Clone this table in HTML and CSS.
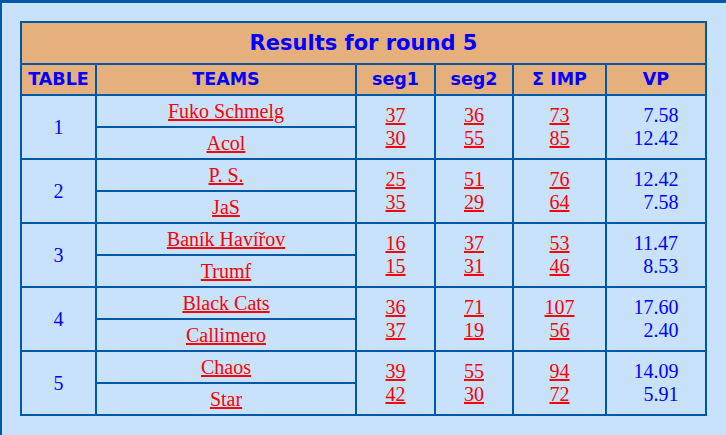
FILE: index.html
```html
<!DOCTYPE html>
<html>
<head>
<meta charset="utf-8">
<title>Results for round 5</title>
<link rel="stylesheet" href="styles.css">
</head>
<body>
<table class="results">
  <colgroup>
    <col class="c-table"><col class="c-teams"><col class="c-seg"><col class="c-seg2"><col class="c-imp"><col class="c-vp">
  </colgroup>
  <thead>
    <tr><th class="title" colspan="6">Results for round 5</th></tr>
    <tr class="heads"><th>TABLE</th><th>TEAMS</th><th>seg1</th><th>seg2</th><th>&Sigma; IMP</th><th>VP</th></tr>
  </thead>
  <tbody>
    <tr>
      <td class="tbl" rowspan="2">1</td>
      <td class="team"><a href="#">Fuko Schmelg</a></td>
      <td class="num" rowspan="2"><a href="#">37</a><br><a href="#">30</a></td>
      <td class="num" rowspan="2"><a href="#">36</a><br><a href="#">55</a></td>
      <td class="num" rowspan="2"><a href="#">73</a><br><a href="#">85</a></td>
      <td class="vp" rowspan="2"><div class="vpbox">7.58<br>12.42</div></td>
    </tr>
    <tr><td class="team"><a href="#">Acol</a></td></tr>
    <tr>
      <td class="tbl" rowspan="2">2</td>
      <td class="team"><a href="#">P. S.</a></td>
      <td class="num" rowspan="2"><a href="#">25</a><br><a href="#">35</a></td>
      <td class="num" rowspan="2"><a href="#">51</a><br><a href="#">29</a></td>
      <td class="num" rowspan="2"><a href="#">76</a><br><a href="#">64</a></td>
      <td class="vp" rowspan="2"><div class="vpbox">12.42<br>7.58</div></td>
    </tr>
    <tr><td class="team"><a href="#">JaS</a></td></tr>
    <tr>
      <td class="tbl" rowspan="2">3</td>
      <td class="team"><a href="#">Baník Havířov</a></td>
      <td class="num" rowspan="2"><a href="#">16</a><br><a href="#">15</a></td>
      <td class="num" rowspan="2"><a href="#">37</a><br><a href="#">31</a></td>
      <td class="num" rowspan="2"><a href="#">53</a><br><a href="#">46</a></td>
      <td class="vp" rowspan="2"><div class="vpbox">11.47<br>8.53</div></td>
    </tr>
    <tr><td class="team"><a href="#">Trumf</a></td></tr>
    <tr>
      <td class="tbl" rowspan="2">4</td>
      <td class="team"><a href="#">Black Cats</a></td>
      <td class="num" rowspan="2"><a href="#">36</a><br><a href="#">37</a></td>
      <td class="num" rowspan="2"><a href="#">71</a><br><a href="#">19</a></td>
      <td class="num" rowspan="2"><a href="#">107</a><br><a href="#">56</a></td>
      <td class="vp" rowspan="2"><div class="vpbox">17.60<br>2.40</div></td>
    </tr>
    <tr><td class="team"><a href="#">Callimero</a></td></tr>
    <tr>
      <td class="tbl" rowspan="2">5</td>
      <td class="team"><a href="#">Chaos</a></td>
      <td class="num" rowspan="2"><a href="#">39</a><br><a href="#">42</a></td>
      <td class="num" rowspan="2"><a href="#">55</a><br><a href="#">30</a></td>
      <td class="num" rowspan="2"><a href="#">94</a><br><a href="#">72</a></td>
      <td class="vp" rowspan="2"><div class="vpbox">14.09<br>5.91</div></td>
    </tr>
    <tr><td class="team"><a href="#">Star</a></td></tr>
  </tbody>
</table>
</body>
</html>
```
FILE: styles.css
```css
html, body {
  margin: 0;
  background: #c8e2fc;
}
body {
  min-height: 435px;
  box-sizing: border-box;
  border-top: 3px solid #0059a6;
  border-left: 2px solid #0059a6;
  padding: 18px 0 0 18px;
  font-family: "Liberation Serif", "Times New Roman", serif;
  font-size: 20px;
  color: #0000ff;
}
.results {
  border-collapse: collapse;
  table-layout: fixed;
  width: 687px;
  border: 2px solid #0059a6;
}
.results th, .results td {
  border: 2px solid #0059a6;
  padding: 0;
  text-align: center;
}
.c-table { width: 75px; }
.c-teams { width: 260px; }
.c-seg { width: 79px; }
.c-seg2 { width: 78px; }
.c-imp { width: 93px; }
.c-vp { width: 100px; }
.results th {
  background: #e5b07b;
  color: #0000ff;
  font-family: "DejaVu Sans", Verdana, sans-serif;
  font-weight: bold;
}
.title {
  font-size: 21px;
  height: 40px;
  line-height: 40px;
}
.heads th {
  font-size: 17.5px;
  height: 29px;
  line-height: 29px;
}
.results td {
  line-height: 23px;
}
.team {
  height: 30px;
}
.results a {
  color: #ff0000;
  text-decoration: underline;
}
.vpbox {
  display: inline-block;
  text-align: right;
}
```
